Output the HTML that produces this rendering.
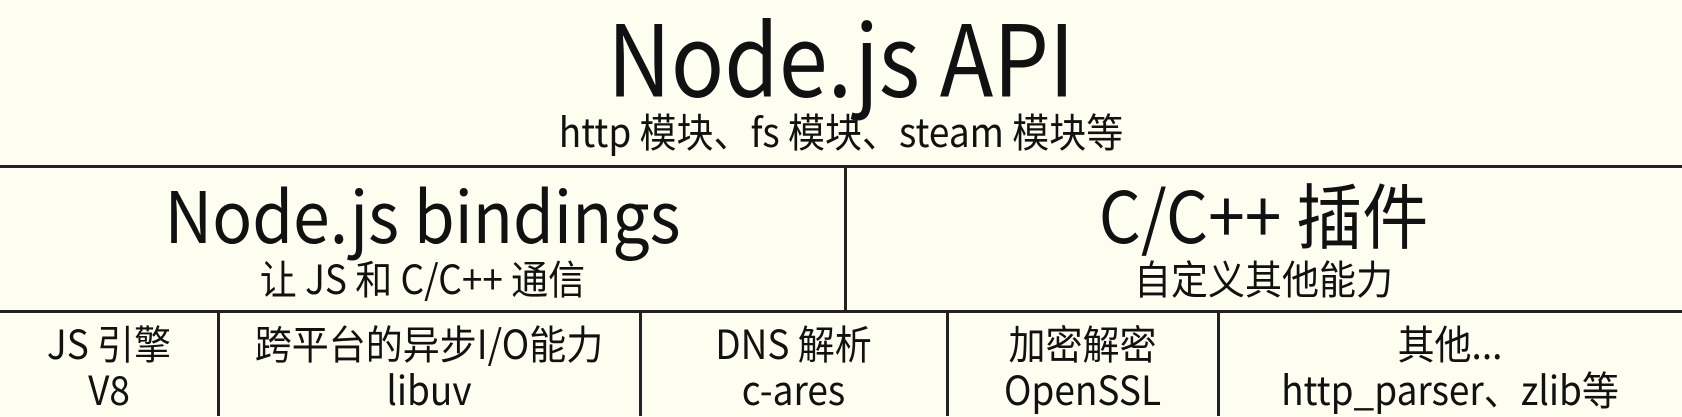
<!DOCTYPE html>
<html><head><meta charset="utf-8"><style>
html,body{margin:0;padding:0}
body{width:1682px;height:416px;background:#fdfdf0;position:relative;overflow:hidden;font-family:"Liberation Sans","Noto Sans CJK SC",sans-serif;color:#111}
.t{position:absolute;white-space:nowrap;text-align:center;font-family:"Noto Sans CJK SC",sans-serif;line-height:1}
.h{position:absolute;left:0;width:1682px;height:3px;background:#222}
.v{position:absolute;width:3px;background:#222}
</style></head><body>
<div class="t" style="left:0;width:1682px;top:14px;font-size:88px;transform:scaleY(1.12);transform-origin:50% 80%;">Node.js API</div>
<div class="t" style="left:0;width:1682px;top:112px;font-size:37px;transform:scaleY(1.08)">http 模块、fs 模块、steam 模块等</div>
<div class="h" style="top:165px"></div>
<div class="v" style="left:844px;top:165px;height:146px"></div>
<div class="t" style="left:0;width:845px;top:180px;font-size:66px;transform:scaleY(1.08)">Node.js bindings</div>
<div class="t" style="left:0;width:845px;top:259px;font-size:37px;transform:scaleY(1.08)">让 JS 和 C/C++ 通信</div>
<div class="t" style="left:845px;width:837px;top:180px;font-size:66px;transform:scaleY(1.08)">C/C++ 插件</div>
<div class="t" style="left:845px;width:837px;top:259px;font-size:37px;transform:scaleY(1.08)">自定义其他能力</div>
<div class="h" style="top:310px"></div>
<div class="v" style="left:217px;top:310px;height:106px"></div>
<div class="v" style="left:639px;top:310px;height:106px"></div>
<div class="v" style="left:946px;top:310px;height:106px"></div>
<div class="v" style="left:1217px;top:310px;height:106px"></div>
<div class="t" style="left:0;width:218px;top:324px;font-size:37px;transform:scaleY(1.08)">JS 引擎</div>
<div class="t" style="left:0;width:218px;top:370px;font-size:37px;transform:scaleY(1.08)">V8</div>
<div class="t" style="left:218px;width:422px;top:324px;font-size:37px;transform:scaleY(1.08)">跨平台的异步I/O能力</div>
<div class="t" style="left:218px;width:422px;top:370px;font-size:37px;transform:scaleY(1.08)">libuv</div>
<div class="t" style="left:640px;width:307px;top:324px;font-size:37px;transform:scaleY(1.08)">DNS 解析</div>
<div class="t" style="left:640px;width:307px;top:370px;font-size:37px;transform:scaleY(1.08)">c-ares</div>
<div class="t" style="left:947px;width:271px;top:324px;font-size:37px;transform:scaleY(1.08)">加密解密</div>
<div class="t" style="left:947px;width:271px;top:370px;font-size:37px;transform:scaleY(1.08)">OpenSSL</div>
<div class="t" style="left:1218px;width:464px;top:324px;font-size:37px;transform:scaleY(1.08)">其他...</div>
<div class="t" style="left:1218px;width:464px;top:370px;font-size:37px;transform:scaleY(1.08)">http_parser、zlib等</div>
</body></html>
